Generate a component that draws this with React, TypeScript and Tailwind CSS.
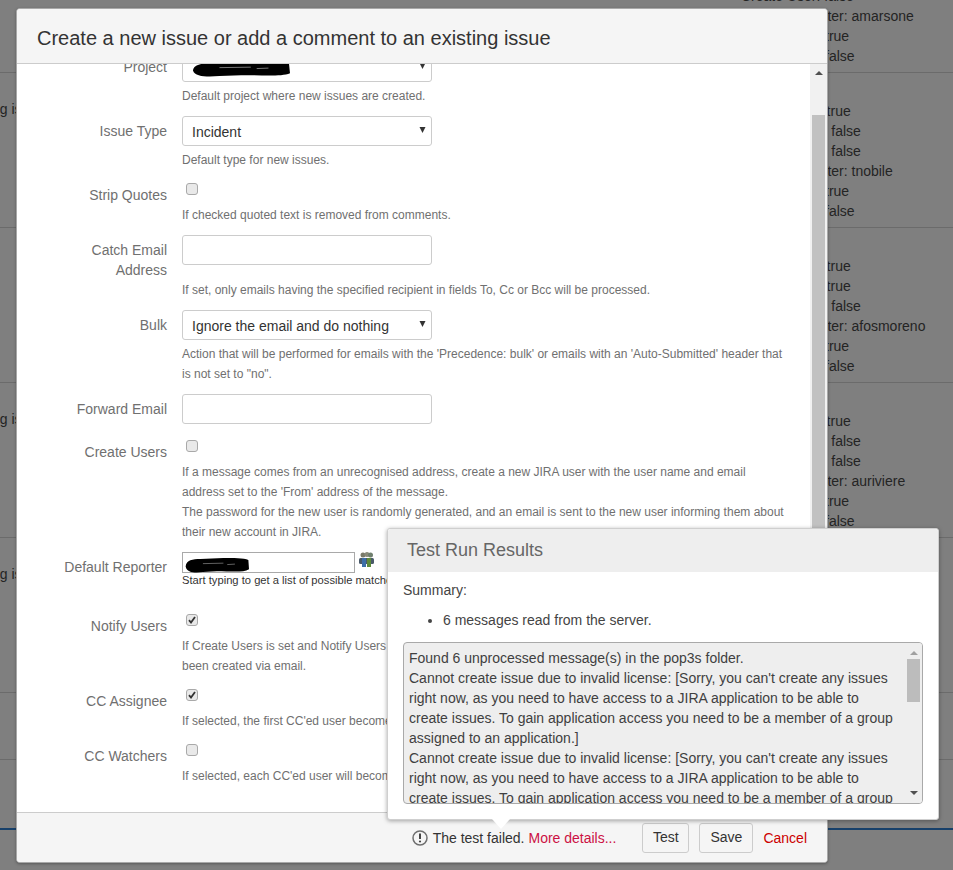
import React from 'react'

type BgRow = {
	height: string
	issue?: boolean
	lines: string[]
}

const bgRows: BgRow[] = [
	{height: 'h-[73px]', lines: ['Create User: false', 'Default Reporter: amarsone', 'Notify Users: true', 'Notify Users: false']},
	{height: 'h-[155px]', issue: true, lines: ['Strip Quotes: true', 'Create Users: false', 'Create Users: false', 'Default Reporter: tnobile', 'Notify Users: true', 'Notify Users: false']},
	{height: 'h-[155px]', lines: ['Strip Quotes: true', 'Strip Quotes: true', 'Create Users: false', 'Default Reporter: afosmoreno', 'Notify Users: true', 'Notify Users: false']},
	{height: 'h-[155px]', issue: true, lines: ['Strip Quotes: true', 'Create Users: false', 'Create Users: false', 'Default Reporter: auriviere', 'Notify Users: true', 'Notify Users: false']},
	{height: 'h-[155px]', issue: true, lines: []},
	{height: 'h-[67px]', lines: []},
]

function Background() {
	return (
		<div className="flex flex-col">
			{bgRows.map((row, i) => (
				<div
					key={i}
					className={`${row.height} relative flex flex-col justify-end overflow-hidden border-b border-[#6b6b6b] pb-[6px] pl-[741px] text-[14px] leading-5 text-[#242424]`}>
					{row.issue && <span className="absolute left-[-8px] top-[26px] whitespace-nowrap">ng issues</span>}
					{row.lines.map((line, j) => (
						<div key={j}>{line}</div>
					))}
				</div>
			))}
			<div className="h-[70px] border-b-2 border-[#17406a]" />
		</div>
	)
}

function Redacted({className}: {className: string}) {
	return (
		<svg
			className={className}
			viewBox="0 0 100 16"
			preserveAspectRatio="none">
			<path
				d="M1 9 C2 2 12 1 24 1 L60 0 C75 0 92 0 99 2 L100 12 C90 16 70 14 50 14 L28 15 C16 16 3 16 1 9 Z"
				fill="#000"
			/>
			<path
				d="M28 6 L60 5.500 M66 7 L78 6.500"
				stroke="#9a9a9a"
				strokeWidth="0.8"
			/>
		</svg>
	)
}

function Check({checked = false}: {checked?: boolean}) {
	return (
		<span className="relative ml-[4px] block h-[12px] w-[12px]">
			<input
				type="checkbox"
				readOnly
				checked={checked}
				className="block h-[12px] w-[12px] appearance-none rounded-[3px] border border-[#a9a9a9] bg-[#e9e9e9]"
			/>
			{checked && (
				<svg
					className="absolute left-[2px] top-[2px] h-[8px] w-[8px]"
					viewBox="0 0 8 8">
					<path
						d="M1 4.200 L3 6.500 L7 1"
						fill="none"
						stroke="#333"
						strokeWidth="1.800"
					/>
				</svg>
			)}
		</span>
	)
}

function CheckRow({checked = false}: {checked?: boolean}) {
	return (
		<div className="h-[21px] pt-[3px]">
			<Check checked={checked} />
		</div>
	)
}

function Select({value, redacted}: {value?: string; redacted?: boolean}) {
	return (
		<div className="relative h-[30px] w-[250px]">
			<select
				className="h-[30px] w-[250px] appearance-none rounded-[3px] border border-[#cccccc] bg-white pl-[9px] pt-[2px] text-[14px] text-[#333]"
				defaultValue={value}>
				{value && <option>{value}</option>}
			</select>
			{redacted && <Redacted className="absolute left-[10px] top-[10px] h-[15px] w-[98px]" />}
			<svg
				className="absolute left-[237px] top-[11px] h-[6px] w-[7px]"
				viewBox="0 0 7 6">
				<path
					d="M0.500 0 H6.500 L3.500 6 Z"
					fill="#333"
				/>
			</svg>
		</div>
	)
}

function TextInput() {
	return (
		<input
			type="text"
			className="block h-[30px] w-[250px] rounded-[3px] border border-[#cccccc] bg-white"
		/>
	)
}

function Help({children, className = 'mt-[4px]'}: {children: React.ReactNode; className?: string}) {
	return <div className={`${className} text-[12px] leading-5 text-[#707070]`}>{children}</div>
}

function Row({label, children, className = 'mb-[10px]'}: {label: React.ReactNode; children: React.ReactNode; className?: string}) {
	return (
		<div className={`flex ${className}`}>
			<label className="w-[150px] shrink-0 pt-[5px] text-right text-[14px] leading-5 text-[#707070]">{label}</label>
			<div className="ml-[15px] w-[603px] shrink-0">{children}</div>
		</div>
	)
}

function Form() {
	return (
		<div className="mt-[-12px] flex flex-col">
			<Row label="Project">
				<Select redacted />
				<Help>Default project where new issues are created.</Help>
			</Row>
			<Row label="Issue Type">
				<Select value="Incident" />
				<Help>Default type for new issues.</Help>
			</Row>
			<Row label="Strip Quotes">
				<CheckRow />
				<Help>If checked quoted text is removed from comments.</Help>
			</Row>
			<Row label={<>Catch Email<br />Address</>}>
				<TextInput />
				<Help className="mt-[15px]">If set, only emails having the specified recipient in fields To, Cc or Bcc will be processed.</Help>
			</Row>
			<Row label="Bulk">
				<Select value="Ignore the email and do nothing" />
				<Help>Action that will be performed for emails with the 'Precedence: bulk' or emails with an 'Auto-Submitted' header that is not set to "no".</Help>
			</Row>
			<Row
				label="Forward Email"
				className="mb-[13px]">
				<TextInput />
			</Row>
			<Row label="Create Users">
				<CheckRow />
				<Help>
					If a message comes from an unrecognised address, create a new JIRA user with the user name and email address set to the 'From' address of the message.
					<br />
					The password for the new user is randomly generated, and an email is sent to the new user informing them about their new account in JIRA.
				</Help>
			</Row>
			<Row
				label="Default Reporter"
				className="h-[59px]">
				<div className="flex items-start">
					<div className="relative h-[21px] w-[173px] border border-[#a9a9a9] bg-white">
						<Redacted className="absolute left-[2px] top-[5px] h-[15px] w-[64px]" />
					</div>
					<svg
						className="ml-[4px] h-[16px] w-[15px]"
						viewBox="0 0 15 16">
						<circle cx="4" cy="3" r="2.500" fill="#7a7a6a" />
						<circle cx="8" cy="2.500" r="2.500" fill="#8a8a7a" />
						<circle cx="11.500" cy="3" r="2.500" fill="#6f7f6f" />
						<rect x="0" y="6" width="15" height="6" rx="1.500" fill="#4a5a6a" />
						<rect x="3" y="6" width="4" height="9" fill="#3d6fa8" />
						<rect x="8" y="6" width="4" height="9" fill="#5d8a3a" />
					</svg>
				</div>
				<div className="text-[11.2px] leading-[15px] text-[#333]">Start typing to get a list of possible matches.</div>
			</Row>
			<Row label="Notify Users">
				<CheckRow checked />
				<Help>
					If Create Users is set and Notify Users is checked, an email is sent to users who have
					<br />
					been created via email.
				</Help>
			</Row>
			<Row label="CC Assignee">
				<CheckRow checked />
				<Help>If selected, the first CC'ed user becomes the assignee when no assignee is set.</Help>
			</Row>
			<Row label="CC Watchers">
				<CheckRow />
				<Help>If selected, each CC'ed user will become a watcher of the created issue.</Help>
			</Row>
		</div>
	)
}

function Modal() {
	return (
		<div className="absolute left-[16px] top-[8px] flex h-[855px] w-[812px] flex-col overflow-hidden rounded-[4px] border border-[#a8a8a8] bg-white shadow-[0_1px_3px_rgba(0,0,0,0.3)]">
			<div className="flex h-[55px] shrink-0 items-center border-b border-[#cccccc] bg-[#f5f5f5] pl-[20px] pt-[3px] text-[20px] text-[#333]">
				Create a new issue or add a comment to an existing issue
			</div>
			<div className="flex h-[748px] shrink-0">
				<div className="flex-1 overflow-hidden">
					<Form />
				</div>
				<div className="flex w-[17px] shrink-0 flex-col items-center bg-[#f1f1f1]">
					<svg
						className="mt-[7px] h-[4px] w-[8px]"
						viewBox="0 0 8 4">
						<path
							d="M4 0 L8 4 H0 Z"
							fill="#505050"
						/>
					</svg>
					<div className="mt-[40px] h-[560px] w-[13px] bg-[#c1c1c1]" />
				</div>
			</div>
			<div className="flex flex-1 items-center justify-end border-t border-[#cccccc] bg-[#f5f5f5] pr-[20px] text-[14px] text-[#333]">
				<svg
					className="h-[16px] w-[16px]"
					viewBox="0 0 16 16">
					<circle cx="8" cy="8" r="7" fill="none" stroke="#6f6f6f" strokeWidth="1.500" />
					<path d="M8 3.500 V9" stroke="#444" strokeWidth="2" />
					<circle cx="8" cy="11.500" r="1.100" fill="#444" />
				</svg>
				<span className="ml-[5px] mt-[1px]">The test failed.</span>
				<span className="ml-[4px] mt-[1px] text-[#cc1144]">More details...</span>
				<button className="ml-[26px] h-[30px] w-[47px] rounded-[3px] border border-[#cccccc] bg-[#f5f5f5]">Test</button>
				<button className="ml-[10px] h-[30px] w-[54px] rounded-[3px] border border-[#cccccc] bg-[#f5f5f5]">Save</button>
				<span className="ml-[10px] mt-[1px] text-[#cc0000]">Cancel</span>
			</div>
		</div>
	)
}

function ResultsPopup() {
	return (
		<div className="absolute left-[387px] top-[528px] flex h-[292px] w-[552px] flex-col rounded-[3px] border border-[#cfcfcf] bg-white shadow-[0_1px_4px_rgba(0,0,0,0.35)]">
			<div className="flex h-[43px] shrink-0 items-center rounded-t-[3px] bg-[#eeeeee] pl-[19px] text-[18px] text-[#666]">Test Run Results</div>
			<div className="px-[15px] text-[14px] leading-5 text-[#444]">
				<div className="mt-[8px]">Summary:</div>
				<ul className="ml-[25px] mt-[10px] list-disc pl-[15px]">
					<li>6 messages read from the server.</li>
				</ul>
				<div className="relative mt-[12px] h-[162px] overflow-hidden rounded-[4px] border border-[#a9a9a9] bg-[#eeeeee]">
					<div className="w-[490px] pl-[5px] pt-[5px] text-[#404040]">
						Found 6 unprocessed message(s) in the pop3s folder.
						<br />
						Cannot create issue due to invalid license: [Sorry, you can't create any issues right now, as you need to have access to a JIRA application to be able to create issues. To gain application access you need to be a member of a group assigned to an application.]
						<br />
						Cannot create issue due to invalid license: [Sorry, you can't create any issues right now, as you need to have access to a JIRA application to be able to create issues. To gain application access you need to be a member of a group assigned to an application.]
					</div>
					<div className="absolute right-0 top-0 flex h-full w-[17px] flex-col items-center bg-[#eeeeee]">
						<svg
							className="mt-[8px] h-[4px] w-[8px]"
							viewBox="0 0 8 4">
							<path
								d="M4 0 L8 4 H0 Z"
								fill="#a0a0a0"
							/>
						</svg>
						<div className="mt-[4px] h-[43px] w-[13px] bg-[#bcbcbc]" />
						<svg
							className="mb-[8px] mt-auto h-[4px] w-[8px]"
							viewBox="0 0 8 4">
							<path
								d="M0 0 H8 L4 4 Z"
								fill="#505050"
							/>
						</svg>
					</div>
				</div>
			</div>
			<div className="absolute left-[104px] top-[290px] h-0 w-0 border-x-[9px] border-t-[10px] border-x-transparent border-t-white" />
		</div>
	)
}

export default function App() {
	return (
		<div className="relative h-[870px] w-[953px] overflow-hidden bg-[#7f7f7f] font-['Liberation_Sans',Arial,sans-serif]">
			<Background />
			<Modal />
			<ResultsPopup />
		</div>
	)
}
